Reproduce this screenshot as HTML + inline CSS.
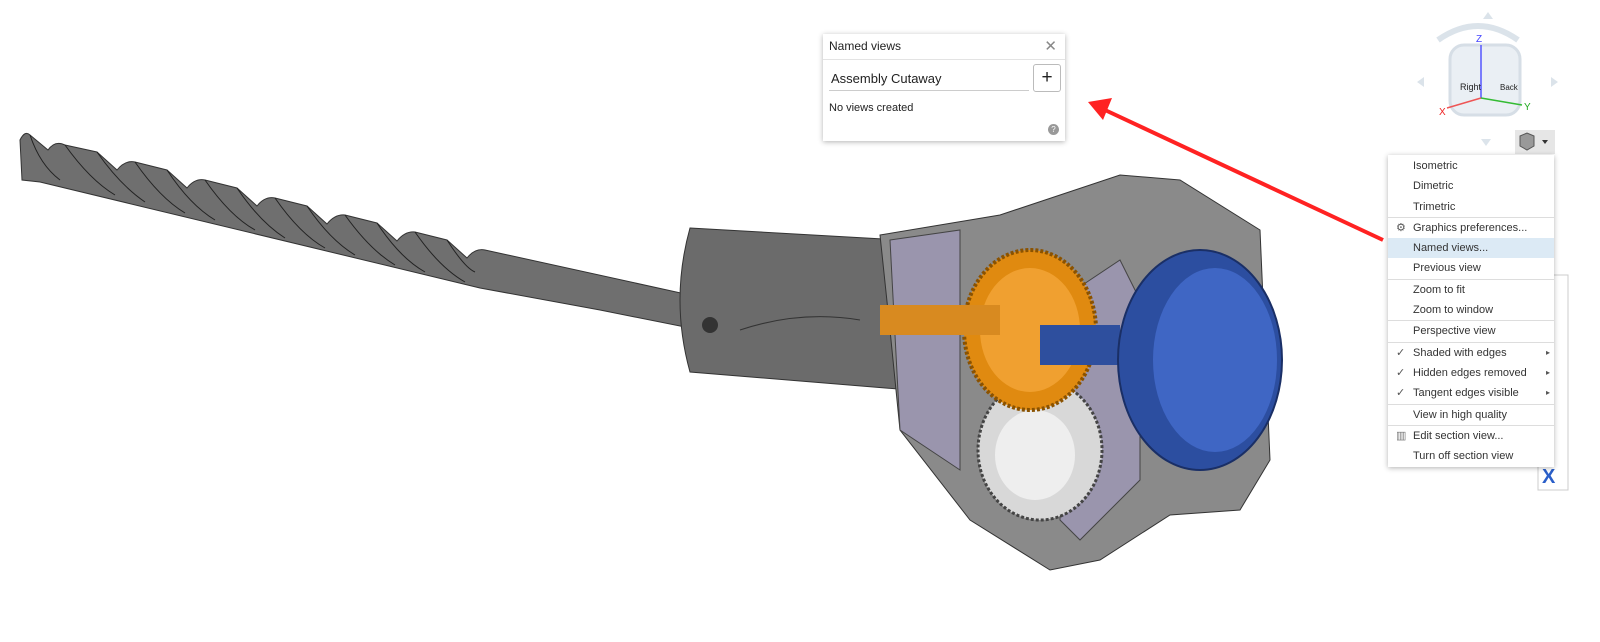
<!DOCTYPE html>
<html><head><style>
body{margin:0;width:1600px;height:642px;background:#fff;position:relative;overflow:hidden;font-family:"Liberation Sans",sans-serif;}
.dlg{position:absolute;left:823px;top:34px;width:242px;height:107px;background:#fff;box-shadow:0 1px 5px rgba(0,0,0,.3);font-size:12px;color:#222}
.menu{position:absolute;left:1388px;top:155px;width:166px;background:#fff;box-shadow:0 1px 5px rgba(0,0,0,.3);font-size:11px;color:#333;padding:1px 0}
.menu div{height:20.3px;line-height:20px;padding-left:25px;position:relative}
.menu .sep{border-top:1px solid #ddd}
.menu .hl{background:#dceaf5}
.menu .ck:before{content:"✓";position:absolute;left:8px;color:#555}
.menu .ar:after{content:"▸";position:absolute;right:4px;font-size:8px;color:#555}
</style></head><body>
<svg width="1600" height="642" style="position:absolute;left:0;top:0">
<defs><linearGradient id="g" x1="0" y1="0" x2="1" y2="0"><stop offset="0" stop-color="#555"/><stop offset=".5" stop-color="#8a8a8a"/><stop offset="1" stop-color="#555"/></linearGradient></defs>
<!-- drill bit -->
<path d="M20,140 Q25,130 30,135 L48,150 Q55,140 65,145 L97,152 L117,170 Q125,160 135,162 L167,170 L187,188 Q195,178 205,180 L237,188 L257,206 Q265,196 275,198 L307,206 L327,224 Q335,214 345,215 L377,223 L397,241 Q405,231 415,232 L447,240 L467,258 Q475,248 485,250 L690,295 L700,330 L600,310 L480,288 L40,182 L22,180 Z" fill="#6f6f6f" stroke="#333"/>
<g stroke="#222" stroke-width="1" fill="none">
<path d="M30,135 Q40,165 60,180"/><path d="M65,145 Q90,180 115,195"/><path d="M97,152 Q120,185 145,202"/>
<path d="M135,162 Q160,198 185,213"/><path d="M167,170 Q190,205 215,220"/>
<path d="M205,180 Q230,216 255,230"/><path d="M237,188 Q260,222 285,238"/>
<path d="M275,198 Q300,234 325,248"/><path d="M307,206 Q330,240 355,255"/>
<path d="M345,215 Q370,250 395,265"/><path d="M377,223 Q400,258 425,272"/>
<path d="M415,232 Q440,268 465,282"/><path d="M447,240 Q465,268 475,272"/>
</g>
<!-- chuck body -->
<path d="M690,228 L900,240 L910,390 L690,372 Q670,300 690,228Z" fill="#6b6b6b" stroke="#333"/>
<ellipse cx="710" cy="325" rx="8" ry="8" fill="#333"/>
<path d="M740,330 q60,-20 120,-10" stroke="#333" fill="none"/>
<!-- housing -->
<path d="M880,235 L1000,215 L1120,175 L1180,180 L1260,230 L1270,460 L1240,510 L1170,515 L1100,560 L1050,570 L970,520 L900,430 L890,330Z" fill="#8a8a8a" stroke="#333"/>
<path d="M890,240 L960,230 L960,470 L900,430 Z" fill="#9a95ad" stroke="#444"/>
<path d="M1060,300 L1120,260 L1140,300 L1140,480 L1080,540 L1060,520Z" fill="#9a95ad" stroke="#444"/>
<!-- gears -->
<ellipse cx="1040" cy="450" rx="62" ry="70" fill="#d8d8d8" stroke="#444" stroke-width="3" stroke-dasharray="3 2"/>
<ellipse cx="1035" cy="455" rx="40" ry="45" fill="#eee"/>
<ellipse cx="1030" cy="330" rx="66" ry="80" fill="#e08a10" stroke="#8a5200" stroke-width="4" stroke-dasharray="3 2"/>
<ellipse cx="1030" cy="330" rx="50" ry="62" fill="#f0a030"/>
<rect x="880" y="305" width="120" height="30" fill="#d88a20"/>
<rect x="1040" y="325" width="80" height="40" fill="#2e4f9e"/>
<!-- blue cup -->
<ellipse cx="1200" cy="360" rx="82" ry="110" fill="#2c4ea0" stroke="#1a2f66" stroke-width="2"/>
<ellipse cx="1215" cy="360" rx="62" ry="92" fill="#3f66c4"/>
<!-- red arrow -->
<line x1="1383" y1="240" x2="1105" y2="110" stroke="#f22" stroke-width="4"/>
<path d="M1088,102 L1112,98 L1103,120Z" fill="#f22"/>
<!-- view cube -->
<g opacity=".8">
<rect x="1450" y="45" width="70" height="70" rx="14" fill="#e5ecf2" stroke="#cdd7e0" stroke-width="3"/>
<path d="M1438,40 q40,-28 80,0" stroke="#d3dde6" stroke-width="6" fill="none"/>
<path d="M1488,12 l5,7 h-10z M1417,82 l7,-5 v10z M1558,82 l-7,-5 v10z M1481,139 l5,7 5,-7z" fill="#d3dde6"/>
</g>
<line x1="1481" y1="45" x2="1481" y2="98" stroke="#55f" stroke-width="1.5"/>
<line x1="1481" y1="98" x2="1447" y2="108" stroke="#e55" stroke-width="1.5"/>
<line x1="1481" y1="98" x2="1522" y2="105" stroke="#3b3" stroke-width="1.5"/>
<text x="1476" y="42" font-size="10" fill="#44f">Z</text>
<text x="1439" y="115" font-size="10" fill="#e22">X</text>
<text x="1524" y="110" font-size="10" fill="#2a2">Y</text>
<text x="1460" y="90" font-size="9" fill="#222">Right</text>
<text x="1500" y="90" font-size="8" fill="#222">Back</text>
<rect x="1515" y="130" width="40" height="24" fill="#e6e6e6"/>
<path d="M1520,136 l7,-3 7,3 v10 l-7,4 -7,-4z" fill="#999" stroke="#555"/>
<path d="M1542,140 h6 l-3,4z" fill="#333"/>
<!-- right toolbar -->
<rect x="1538" y="275" width="30" height="215" fill="#fff" stroke="#ccc"/>
<text x="1542" y="483" font-size="20" font-weight="bold" fill="#2a5fc9">X</text>
</svg>
<div class="dlg">
<div style="height:25px;line-height:25px;padding-left:6px;border-bottom:1px solid #e3e3e3">Named views<span style="position:absolute;right:8px;top:0;color:#888;font-size:15px">✕</span></div>
<div style="position:absolute;left:6px;top:34px;width:198px;height:22px;border-bottom:1px solid #ccc;line-height:22px;font-size:13px;padding-left:2px">Assembly Cutaway</div>
<div style="position:absolute;left:210px;top:30px;width:26px;height:26px;border:1px solid #bbb;border-radius:3px;text-align:center;line-height:25px;font-size:19px">+</div>
<div style="position:absolute;left:6px;top:68px;font-size:11px">No views created</div>
<div style="position:absolute;right:6px;top:90px;width:11px;height:11px;border-radius:50%;background:#999;color:#fff;font-size:8px;text-align:center;line-height:11px">?</div>
</div>
<div class="menu">
<div>Isometric</div><div>Dimetric</div><div>Trimetric</div>
<div class="sep"><span style="position:absolute;left:8px;color:#555">⚙</span>Graphics preferences...</div>
<div class="hl">Named views...</div><div>Previous view</div>
<div class="sep">Zoom to fit</div><div>Zoom to window</div>
<div class="sep">Perspective view</div>
<div class="sep ck ar">Shaded with edges</div><div class="ck ar">Hidden edges removed</div><div class="ck ar">Tangent edges visible</div>
<div class="sep">View in high quality</div>
<div class="sep"><span style="position:absolute;left:8px;color:#777">▥</span>Edit section view...</div><div>Turn off section view</div>
</div>
</body></html>
